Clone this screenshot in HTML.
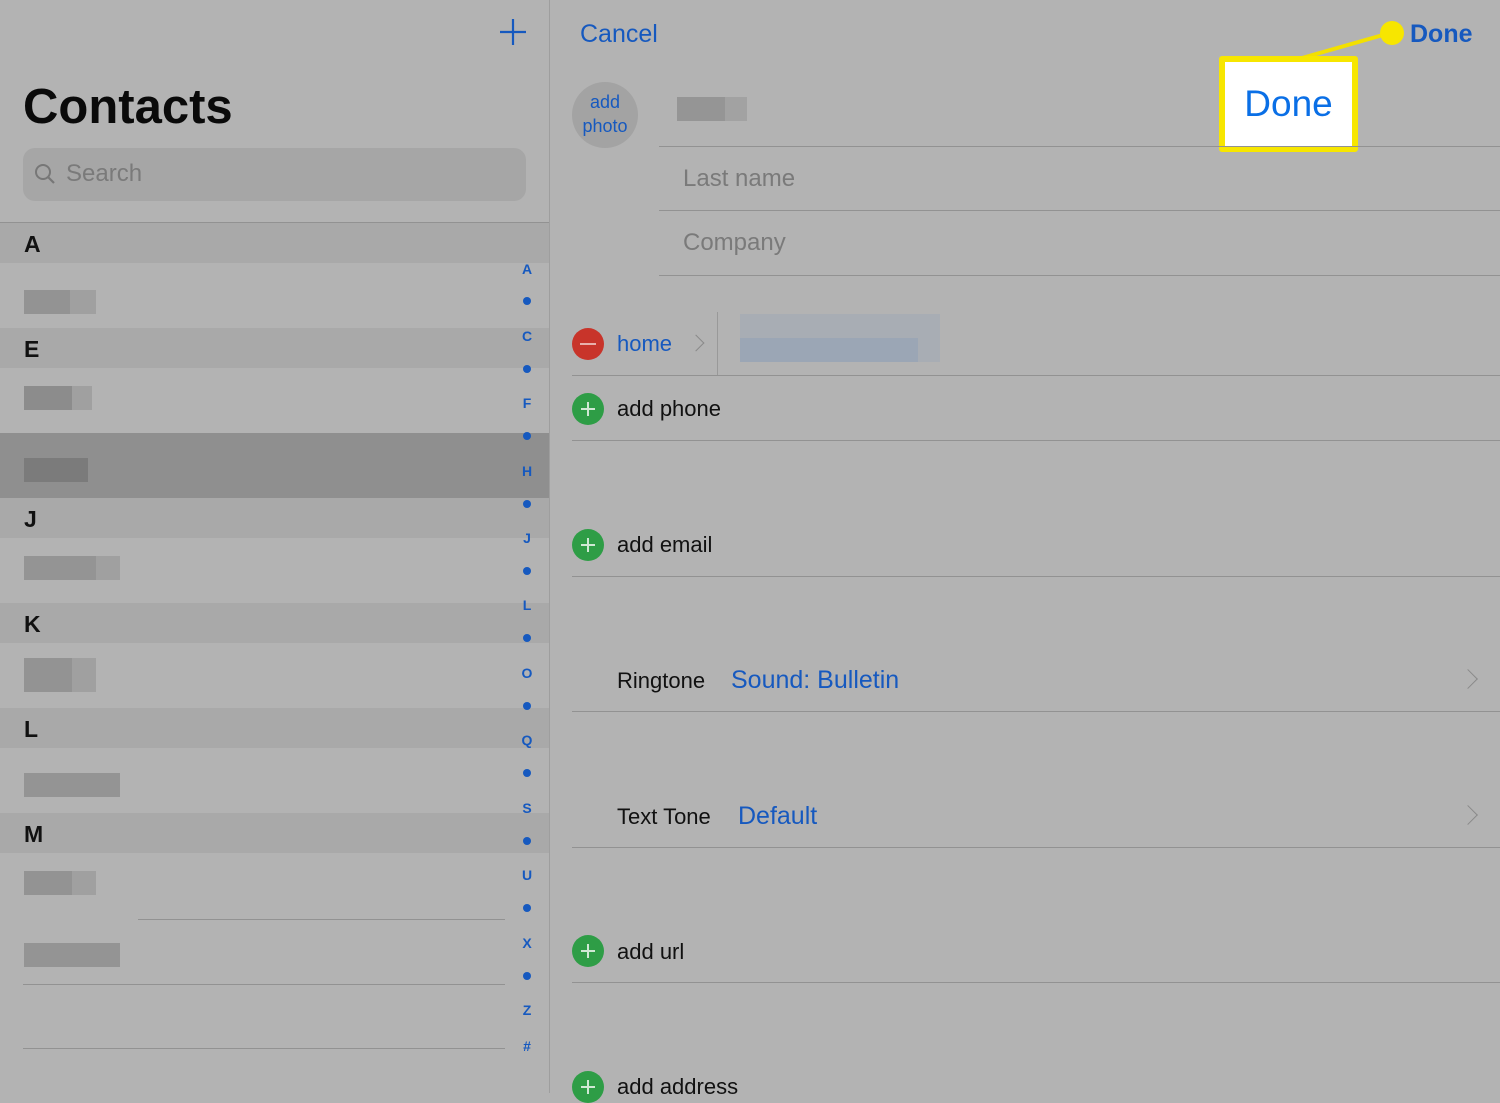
<!DOCTYPE html>
<html><head><style>
*{margin:0;padding:0;box-sizing:border-box}
body{width:1500px;height:1093px;overflow:hidden;background:#b3b3b3;font-family:"Liberation Sans",sans-serif;position:relative}
.a{position:absolute}
.blue{color:#1659bf}
.hdr{position:absolute;left:0;width:549px;height:40px;background:#a9a9a9;font-size:23px;font-weight:bold;padding-left:24px;line-height:42px;color:#111}
.line{position:absolute;height:1px;background:#929292}
.idx{position:absolute;left:515px;width:24px;text-align:center;font-size:14px;color:#1659bf;font-weight:bold}
.dot{position:absolute;left:523px;width:8px;height:8px;border-radius:50%;background:#1659bf}
.blur{position:absolute;background:#9a9a9a}
.lbl{position:absolute;font-size:22px;color:#111}
.plus{position:absolute;left:572px;width:32px;height:32px;border-radius:50%;background:#2e9d46}
.plus:before{content:"";position:absolute;left:9px;top:15px;width:14px;height:1.5px;background:#cfe8d4}
.plus:after{content:"";position:absolute;left:15px;top:9px;width:1.5px;height:14px;background:#cfe8d4}
.chev{position:absolute;left:1461px;width:14px;height:14px;border-right:1.5px solid #8a8a8a;border-top:1.5px solid #8a8a8a;transform:rotate(45deg)}
</style></head><body>
<div class="a" style="left:549px;top:0;width:1px;height:1093px;background:#9e9e9e"></div>
<div class="a blue" style="left:498px;top:14px;font-size:40px;font-weight:200;line-height:40px">
<svg width="30" height="30" viewBox="0 0 30 30"><path d="M15 2V28M2 15H28" stroke="#1659bf" stroke-width="2.2"/></svg></div>
<div class="a" style="left:23px;top:79px;font-size:49px;font-weight:bold;color:#0a0a0a">Contacts</div>
<div class="a" style="left:23px;top:148px;width:503px;height:53px;border-radius:12px;background:#a6a6a6"></div>
<svg class="a" style="left:33px;top:162px" width="24" height="24" viewBox="0 0 24 24"><circle cx="10" cy="10" r="7" fill="none" stroke="#777" stroke-width="2"/><path d="M15 15L21 21" stroke="#777" stroke-width="2.2"/></svg>
<div class="a" style="left:66px;top:160px;font-size:24px;color:#7a7a7a">Search</div>
<div class="line" style="left:0;top:222px;width:549px"></div>
<div class="hdr" style="top:223px">A</div>
<div class="blur" style="left:24px;top:290px;width:72px;height:24px;background:#a0a0a0"></div><div class="blur" style="left:24px;top:290px;width:46px;height:24px;background:#939393"></div>
<div class="hdr" style="top:328px">E</div>
<div class="blur" style="left:24px;top:386px;width:68px;height:24px;background:#a0a0a0"></div><div class="blur" style="left:24px;top:386px;width:48px;height:24px;background:#8c8c8c"></div>
<div class="a" style="left:0;top:433px;width:549px;height:65px;background:#8f8f8f"></div>
<div class="blur" style="left:24px;top:458px;width:64px;height:24px;background:#7b7b7b"></div>
<div class="hdr" style="top:498px">J</div>
<div class="blur" style="left:24px;top:556px;width:96px;height:24px;background:#a0a0a0"></div><div class="blur" style="left:24px;top:556px;width:72px;height:24px;background:#949494"></div>
<div class="hdr" style="top:603px">K</div>
<div class="blur" style="left:24px;top:658px;width:72px;height:34px;background:#a0a0a0"></div><div class="blur" style="left:24px;top:658px;width:48px;height:34px;background:#939393"></div>
<div class="hdr" style="top:708px">L</div>
<div class="blur" style="left:24px;top:773px;width:96px;height:24px;background:#949494"></div>
<div class="hdr" style="top:813px">M</div>
<div class="blur" style="left:24px;top:871px;width:72px;height:24px;background:#a0a0a0"></div><div class="blur" style="left:24px;top:871px;width:48px;height:24px;background:#939393"></div>
<div class="line" style="left:138px;top:919px;width:367px"></div>
<div class="blur" style="left:24px;top:943px;width:96px;height:24px;background:#949494"></div>
<div class="line" style="left:23px;top:984px;width:482px"></div>
<div class="line" style="left:23px;top:1048px;width:482px"></div>
<div class="idx" style="top:261px">A</div><div class="dot" style="top:297px"></div>
<div class="idx" style="top:328px">C</div><div class="dot" style="top:365px"></div>
<div class="idx" style="top:395px">F</div><div class="dot" style="top:432px"></div>
<div class="idx" style="top:463px">H</div><div class="dot" style="top:500px"></div>
<div class="idx" style="top:530px">J</div><div class="dot" style="top:567px"></div>
<div class="idx" style="top:597px">L</div><div class="dot" style="top:634px"></div>
<div class="idx" style="top:665px">O</div><div class="dot" style="top:702px"></div>
<div class="idx" style="top:732px">Q</div><div class="dot" style="top:769px"></div>
<div class="idx" style="top:800px">S</div><div class="dot" style="top:837px"></div>
<div class="idx" style="top:867px">U</div><div class="dot" style="top:904px"></div>
<div class="idx" style="top:935px">X</div><div class="dot" style="top:972px"></div>
<div class="idx" style="top:1002px">Z</div>
<div class="idx" style="top:1038px">#</div>

<div class="a blue" style="left:580px;top:20px;font-size:25px">Cancel</div>
<div class="a blue" style="left:1410px;top:20px;font-size:25px;font-weight:bold">Done</div>
<svg class="a" style="left:1290px;top:20px" width="120" height="45"><path d="M12 38L100 13" stroke="#f3e000" stroke-width="4"/><circle cx="102" cy="13" r="12" fill="#f7e600"/></svg>
<div class="a" style="left:1219px;top:56px;width:139px;height:96px;background:#fff;border:6px solid #f7e600;border-radius:3px;text-align:center;font-size:37px;line-height:84px;color:#0a6fe6">Done</div>
<div class="a" style="left:572px;top:82px;width:66px;height:66px;border-radius:50%;background:#a3a3a3;text-align:center;font-size:18px;line-height:24px;padding-top:8px" ><span class="blue">add<br>photo</span></div>
<div class="blur" style="left:677px;top:97px;width:70px;height:24px;background:#a2a2a2"></div><div class="blur" style="left:677px;top:97px;width:48px;height:24px;background:#959595"></div>
<div class="line" style="left:659px;top:146px;width:841px"></div>
<div class="a" style="left:683px;top:165px;font-size:24px;color:#7a7a7a">Last name</div>
<div class="line" style="left:659px;top:210px;width:841px"></div>
<div class="a" style="left:683px;top:229px;font-size:24px;color:#7a7a7a">Company</div>
<div class="line" style="left:659px;top:275px;width:841px"></div>
<div class="a" style="left:572px;top:328px;width:32px;height:32px;border-radius:50%;background:#c8342a"></div>
<div class="a" style="left:580px;top:343px;width:16px;height:2px;background:#e8b0ab"></div>
<div class="a blue" style="left:617px;top:331px;font-size:22px">home</div>
<div class="a" style="left:690px;top:337px;width:12px;height:12px;border-right:1.5px solid #8a8a8a;border-top:1.5px solid #8a8a8a;transform:rotate(45deg)"></div>
<div class="a" style="left:717px;top:312px;width:1px;height:64px;background:#999"></div>
<div class="a" style="left:740px;top:314px;width:200px;height:48px;background:#a8adb4"></div>
<div class="a" style="left:740px;top:338px;width:178px;height:24px;background:#9ba6b5"></div>
<div class="line" style="left:572px;top:375px;width:928px"></div>
<div class="plus" style="top:393px"></div><div class="lbl" style="left:617px;top:396px">add phone</div>
<div class="line" style="left:572px;top:440px;width:928px"></div>
<div class="plus" style="top:529px"></div><div class="lbl" style="left:617px;top:532px">add email</div>
<div class="line" style="left:572px;top:576px;width:928px"></div>
<div class="lbl" style="left:617px;top:668px">Ringtone</div>
<div class="a blue" style="left:731px;top:666px;font-size:25px">Sound: Bulletin</div>
<div class="chev" style="top:672px"></div>
<div class="line" style="left:572px;top:711px;width:928px"></div>
<div class="lbl" style="left:617px;top:804px">Text Tone</div>
<div class="a blue" style="left:738px;top:802px;font-size:25px">Default</div>
<div class="chev" style="top:808px"></div>
<div class="line" style="left:572px;top:847px;width:928px"></div>
<div class="plus" style="top:935px"></div><div class="lbl" style="left:617px;top:939px">add url</div>
<div class="line" style="left:572px;top:982px;width:928px"></div>
<div class="plus" style="top:1071px"></div><div class="lbl" style="left:617px;top:1074px">add address</div>
</body></html>
